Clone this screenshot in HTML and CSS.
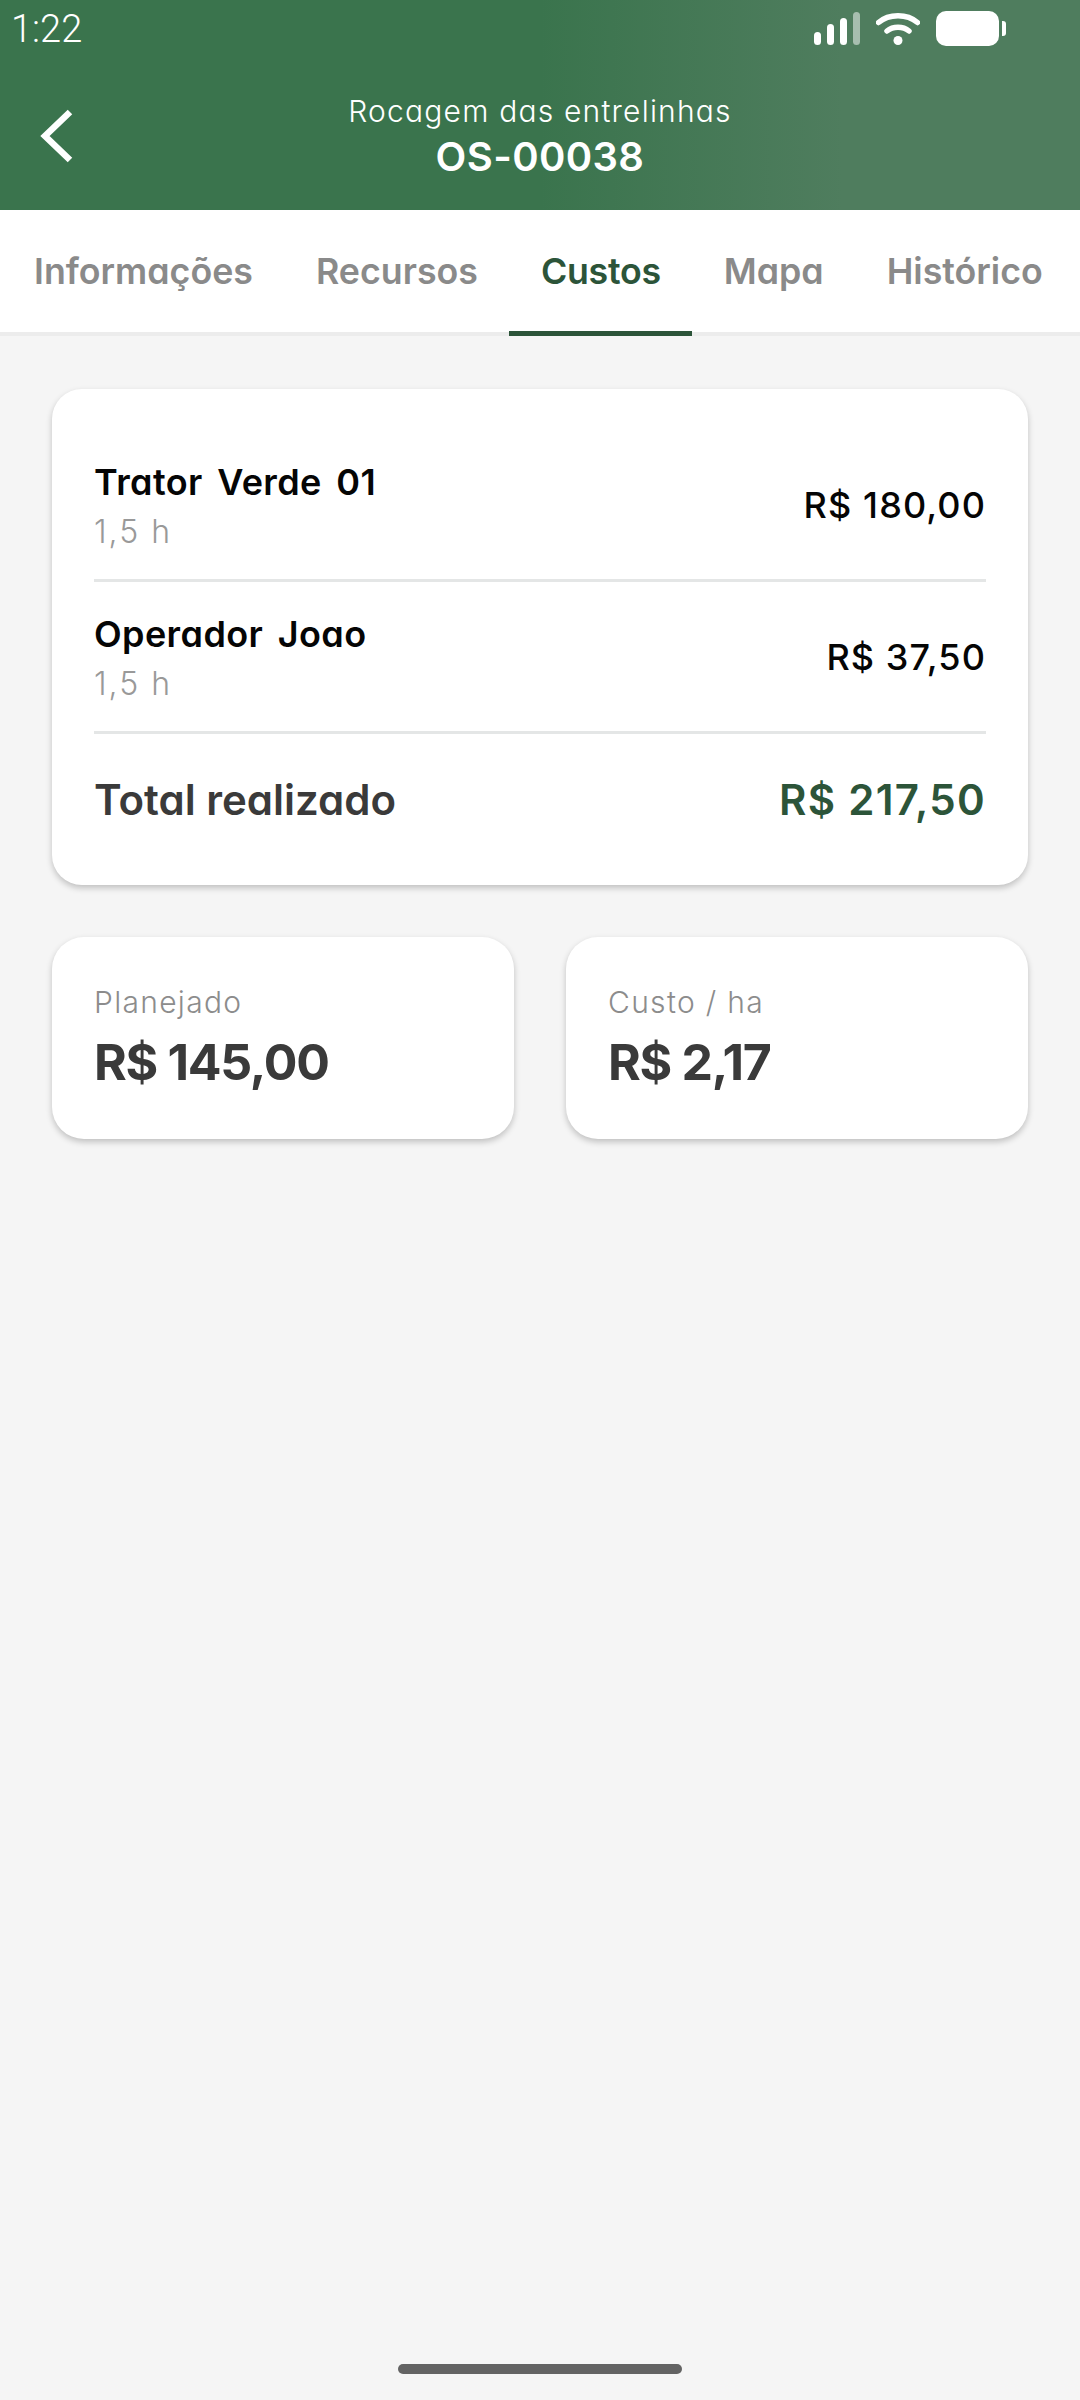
FILE: index.html
```html
<!DOCTYPE html>
<html lang="pt-BR">
<head>
<meta charset="utf-8">
<title>OS-00038</title>
<link rel="stylesheet" href="styles.css">
</head>
<body>
<div class="screen">
  <header class="header">
    <div class="status">
      <span class="time">1:22</span>
      <div class="status-icons">
        <svg class="signal" width="46" height="34" viewBox="0 0 46 34">
          <rect x="0" y="20" width="7" height="13" rx="3.5" fill="#fff"/>
          <rect x="13" y="12" width="7" height="21" rx="3.5" fill="#fff"/>
          <rect x="26" y="6" width="7" height="27" rx="3.5" fill="#fff"/>
          <rect x="39" y="0" width="7" height="33" rx="3.5" fill="#fff" opacity=".5"/>
        </svg>
        <svg class="wifi" width="44" height="34" viewBox="0 0 44 34" fill="none">
          <path d="M2.5 10.5C13 1.5 31 1.5 41.500 10.500" stroke="#fff" stroke-width="5.500" stroke-linecap="round"/>
          <path d="M11 19C17 14 27 14 33 19" stroke="#fff" stroke-width="5.500" stroke-linecap="round"/>
          <circle cx="22" cy="28.500" r="4.500" fill="#fff"/>
        </svg>
        <svg class="battery" width="70" height="36" viewBox="0 0 70 36">
          <rect x="0" y="0" width="63" height="35" rx="10" fill="#fff"/>
          <path d="M66 10h1a3 3 0 0 1 3 3v9a3 3 0 0 1-3 3h-1z" fill="#fff"/>
        </svg>
      </div>
    </div>
    <div class="nav">
      <svg class="back" width="36" height="54" viewBox="0 0 36 54" fill="none">
        <path d="M31 3L6 27L31 51" stroke="#fff" stroke-width="6.500"/>
      </svg>
      <div class="title">
        <div class="title-sub">Rocagem das entrelinhas</div>
        <div class="title-main">OS-00038</div>
      </div>
    </div>
  </header>

  <nav class="tabs">
    <div class="tab">Informações</div>
    <div class="tab">Recursos</div>
    <div class="tab tab-active">Custos</div>
    <div class="tab">Mapa</div>
    <div class="tab">Histórico</div>
  </nav>

  <main class="content">
    <section class="card">
      <div class="row">
        <div class="row-text">
          <div class="row-name">Trator Verde 01</div>
          <div class="row-hours">1,5 h</div>
        </div>
        <div class="row-value">R$ 180,00</div>
      </div>
      <div class="row">
        <div class="row-text">
          <div class="row-name">Operador Joao</div>
          <div class="row-hours">1,5 h</div>
        </div>
        <div class="row-value">R$ 37,50</div>
      </div>
      <div class="total">
        <span class="total-label">Total realizado</span>
        <span class="total-value">R$ 217,50</span>
      </div>
    </section>

    <section class="stats">
      <div class="stat">
        <div class="stat-label">Planejado</div>
        <div class="stat-value">R$ 145,00</div>
      </div>
      <div class="stat">
        <div class="stat-label">Custo / ha</div>
        <div class="stat-value">R$ 2,17</div>
      </div>
    </section>
  </main>

  <div class="home-area"><div class="home-bar"></div></div>
</div>
</body>
</html>
```
FILE: styles.css
```css
* { box-sizing: border-box; }
html, body { margin: 0; padding: 0; }
body {
  width: 1080px;
  height: 2400px;
  background: #f5f5f5;
  font-family: Inter, "Liberation Sans", sans-serif;
  overflow: hidden;
}
.screen { display: flex; flex-direction: column; height: 2400px; }

.header {
  height: 210px;
  background: linear-gradient(90deg, #3a744d 0%, #3a744d 50%, #4f7d5e 78%, #4f7d5e 100%);
  color: #fff;
  display: flex;
  flex-direction: column;
}
.status {
  height: 60px;
  display: flex;
  align-items: center;
  justify-content: space-between;
  padding: 0 74px 2px 11px;
}
.time {
  font-family: Roboto, sans-serif;
  font-weight: 300;
  font-size: 38px;
  line-height: 60px;
}
.status-icons { display: flex; align-items: center; gap: 16px; }
.status-icons svg { display: block; }

.nav {
  flex: 1;
  position: relative;
  display: flex;
  justify-content: center;
  align-items: flex-start;
}
.back { position: absolute; left: 39px; top: 49px; }
.title { text-align: center; padding-top: 33px; font-feature-settings: "cv11"; }
.title-sub { font-size: 30px; line-height: 36px; font-weight: 300; letter-spacing: 1.2px; }
.title-main { font-size: 40px; line-height: 56px; font-weight: 600; letter-spacing: .4px; }

.tabs {
  height: 126px;
  background: #fff;
  border-bottom: 4px solid #ececec;
  display: flex;
  padding-left: 2.5px;
  font-feature-settings: "cv11";
}
.tab {
  padding: 0 31.5px;
  height: 126px;
  line-height: 122px;
  font-size: 35.75px;
  font-weight: 600;
  color: #8a8a8a;
  white-space: nowrap;
}
.tab-active {
  color: #2c5439;
  border-bottom: 5px solid #2c5439;
  letter-spacing: -.3px;
}

.content { flex: 1; padding: 53px 52px 0; display: flex; flex-direction: column; gap: 52px; }

.card {
  background: #fff;
  border-radius: 30px;
  box-shadow: 0 3px 6px rgba(0, 0, 0, .22);
  padding: 41px 42px 21px;
  font-feature-settings: "cv11";
}
.row {
  height: 152px;
  border-bottom: 3px solid #e4e6e6;
  display: flex;
  align-items: center;
  justify-content: space-between;
}
.row-name { font-size: 36px; line-height: 54px; font-weight: 600; color: #050505; letter-spacing: .4px; word-spacing: 5px; }
.row-hours { font-size: 32px; line-height: 46px; font-weight: 300; color: #999; letter-spacing: 2px; }
.row-value { font-size: 36px; font-weight: 550; color: #050505; letter-spacing: 1.1px; }
.total {
  height: 130px;
  display: flex;
  align-items: center;
  justify-content: space-between;
  font-size: 42px;
  font-weight: 600;
}
.total-label { color: #3a3a3a; }
.total-value { color: #2c5439; letter-spacing: 1.3px; }

.stats { display: grid; grid-template-columns: 462px 462px; gap: 52px; }
.stat {
  height: 202px;
  background: #fff;
  border-radius: 32px;
  box-shadow: 0 3px 6px rgba(0, 0, 0, .22);
  padding: 45px 42px 0;
}
.stat-label { font-size: 30px; line-height: 40px; font-weight: 300; color: #8c8c8c; letter-spacing: 1.3px; }
.stat-value { font-size: 50px; line-height: 80px; font-weight: 700; color: #3a3a3a; letter-spacing: -1.3px; }

.home-area { height: 36px; display: flex; justify-content: center; }
.home-bar { width: 284px; height: 10px; border-radius: 5px; background: #636363; }
```
